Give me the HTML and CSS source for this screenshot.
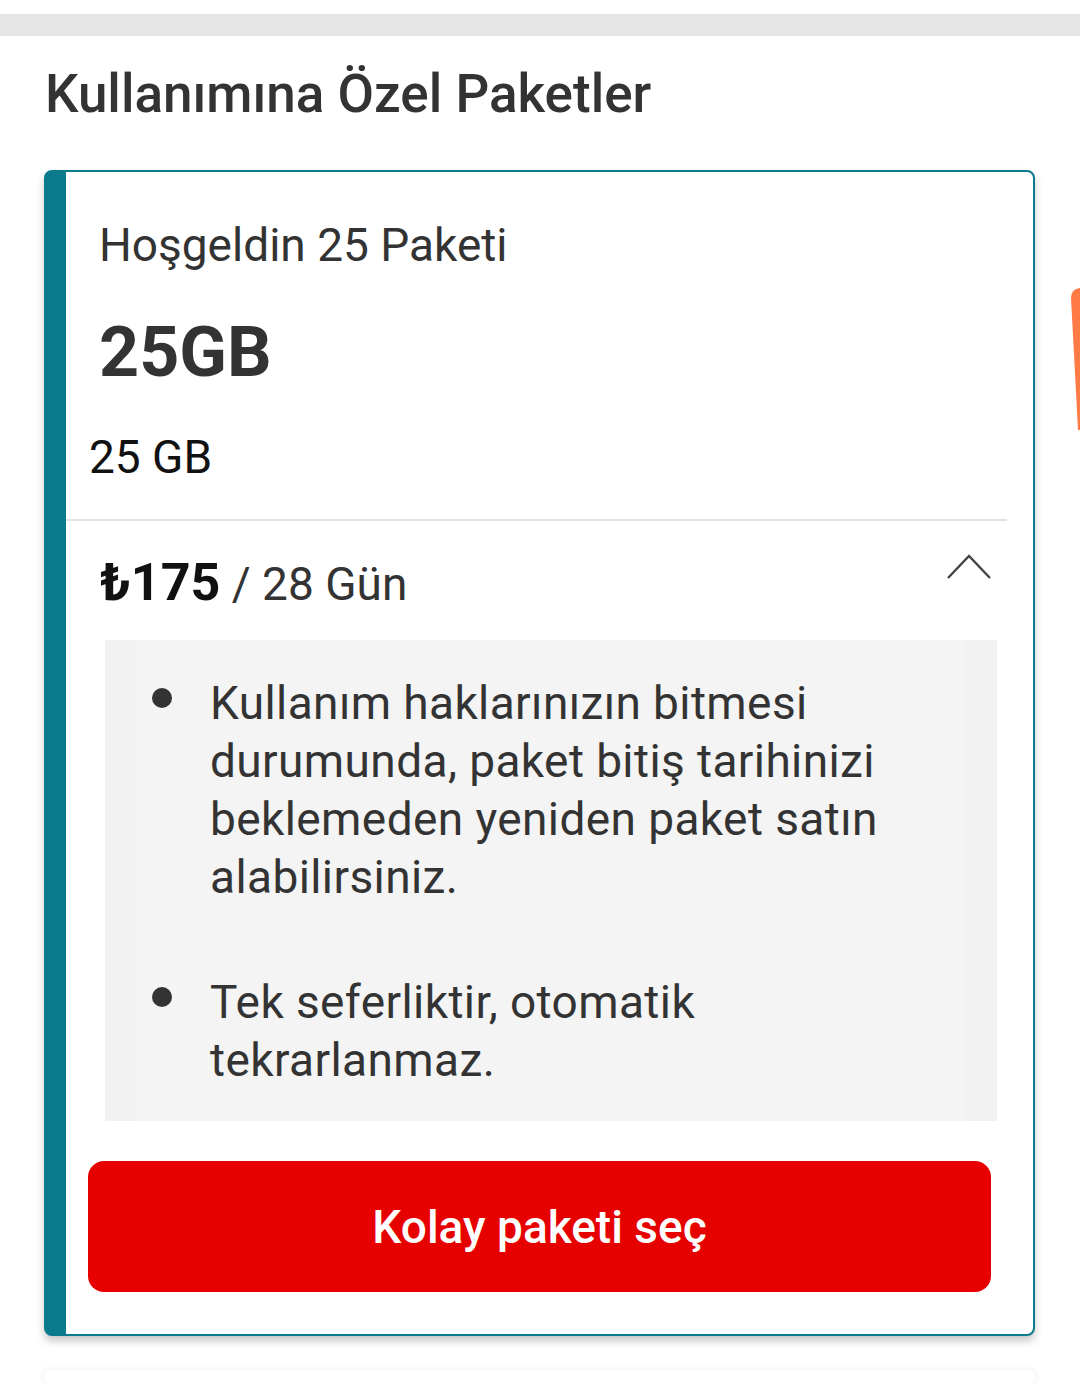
FILE: index.html
```html
<!DOCTYPE html>
<html lang="tr">
<head>
  <meta charset="UTF-8" />
  <title>Kullanımına Özel Paketler</title>
  <meta name="viewport" content="width=device-width, initial-scale=1.0"/>
  <link rel="stylesheet" href="styles.css">
</head>
<body>

  <div class="top-bar"></div>

  <h2 class="section-title">Kullanımına Özel Paketler</h2>

  <!-- next card in the carousel, only its edge is visible -->
  <svg class="peek-card" width="12" height="150" viewBox="0 0 12 150">
    <path d="M3 14 Q3 5 12 4 L12 146 L10 146 Z" fill="#ff7a45"/>
  </svg>

  <div class="package-card">
    <div class="package-head">
      <p class="package-name">Hoşgeldin 25 Paketi</p>
      <p class="package-amount">25GB</p>
      <p class="package-detail">25 GB</p>
    </div>

    <div class="price-row">
      <p class="price"><strong>₺175</strong> / 28 Gün</p>
      <svg class="chevron" width="46" height="28" viewBox="0 0 46 28">
        <polyline points="2,25 23,3 44,25" fill="none" stroke="#444" stroke-width="2.4"/>
      </svg>
    </div>

    <div class="info-box">
      <ul class="info-list">
        <li><span class="dot"></span><span>Kullanım haklarınızın bitmesi durumunda, paket bitiş tarihinizi beklemeden yeniden paket satın alabilirsiniz.</span></li>
        <li><span class="dot"></span><span>Tek seferliktir, otomatik tekrarlanmaz.</span></li>
      </ul>
    </div>

    <button class="select-btn">Kolay paketi seç</button>
  </div>

  <div class="package-card next"></div>

</body>
</html>
```

FILE: styles.css
```css
body {
  margin: 0;
  font-family: Roboto, "Noto Sans", sans-serif;
  background-color: #fff;
  color: #333;
  position: relative;
  overflow: hidden;
}

p {
  margin: 0;
}

.top-bar {
  height: 22px;
  margin-top: 14px;
  background-color: #e5e5e5;
}

.section-title {
  margin: 26px 45px 44px;
  font-size: 53px;
  line-height: 64px;
  font-weight: 500;
  color: #333;
}

.peek-card {
  position: absolute;
  top: 284px;
  left: 1068px;
}

.package-card {
  margin: 0 45px 0 44px;
  border: 2px solid #0a7b8c;
  border-left-width: 22px;
  border-radius: 8px;
  background-color: #fff;
  box-shadow: 0 5px 9px rgba(0, 0, 0, 0.22);
  padding-bottom: 42px;
}

.package-card.next {
  margin-top: 34px;
  height: 14px;
  padding: 0;
  border: none;
  box-shadow: 0 0 8px rgba(0, 0, 0, 0.08);
}

.package-head {
  padding-top: 45px;
  padding-bottom: 35px;
  margin-right: 26px;
  border-bottom: 2px solid #e2e2e2;
}

.package-name {
  padding-left: 33px;
  font-size: 46px;
  line-height: 56px;
}

.package-amount {
  margin-top: 39px;
  padding-left: 33px;
  font-size: 70px;
  line-height: 80px;
  font-weight: 700;
}

.package-detail {
  margin-top: 38px;
  padding-left: 23px;
  font-size: 46px;
  line-height: 54px;
  color: #111;
}

.price-row {
  display: flex;
  justify-content: space-between;
  align-items: flex-start;
  margin: 30px 41px 0 34px;
}

.price {
  font-size: 46px;
  line-height: 64px;
  color: #333;
}

.price strong {
  font-size: 52px;
  font-weight: 700;
  color: #111;
}

.chevron {
  margin-top: 2px;
}

.info-box {
  margin: 24px 36px 0 39px;
  padding: 0 32px;
  background-color: #f1f1f1;
}

.info-list {
  list-style: none;
  margin: 0;
  padding: 34px 0 32px;
  background-color: #f4f4f4;
}

.info-list li {
  display: flex;
  align-items: flex-start;
  padding-right: 4px;
  font-size: 46px;
  line-height: 58px;
  letter-spacing: 0.4px;
  color: #333;
}

.info-list li + li {
  margin-top: 67px;
}

.dot {
  flex: none;
  width: 20px;
  height: 20px;
  margin: 14px 38px 0 15px;
  border-radius: 50%;
  background-color: #333;
}

.select-btn {
  display: block;
  width: calc(100% - 64px);
  height: 131px;
  margin: 40px 42px 0 22px;
  border: none;
  border-radius: 16px;
  background-color: #e60000;
  color: white;
  font-family: Roboto, sans-serif;
  font-size: 46px;
  font-weight: 500;
  cursor: pointer;
}
```
